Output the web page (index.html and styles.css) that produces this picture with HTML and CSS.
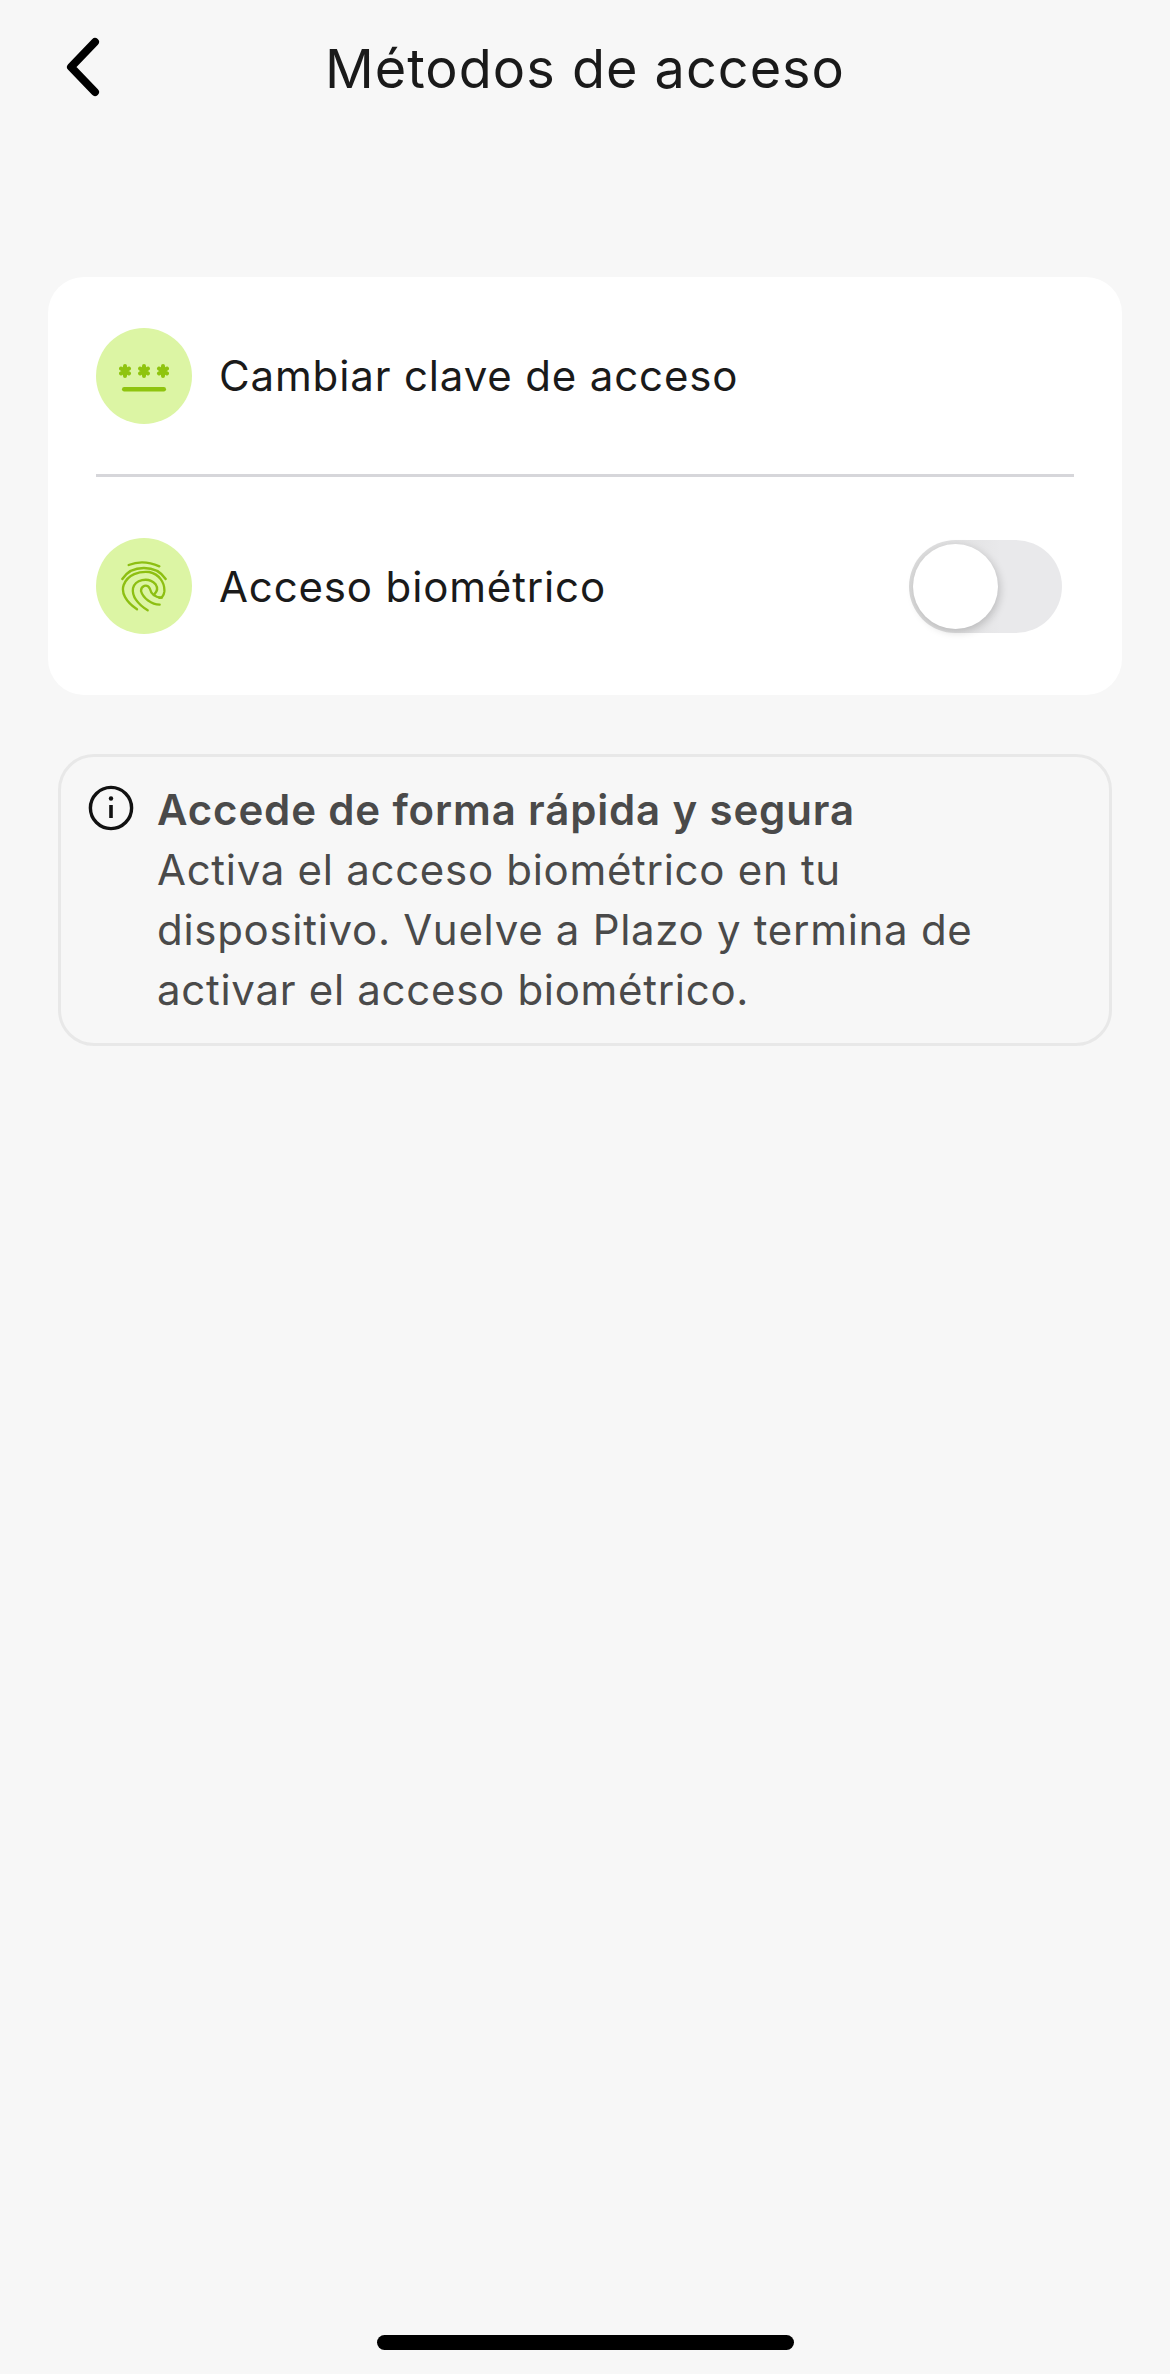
FILE: index.html
```html
<!DOCTYPE html>
<html lang="es">
<head>
    <meta charset="UTF-8">
    <meta name="viewport" content="width=device-width, initial-scale=1.0">
    <title>Métodos de acceso</title>
    <link rel="stylesheet" href="styles.css">
</head>
<body>
    <header class="topbar">
        <button class="back" aria-label="Volver">
            <svg width="40" height="64" viewBox="0 0 40 64" fill="none" stroke="#000" stroke-width="8" stroke-linecap="round" stroke-linejoin="round">
                <path d="M31 7 L7 32 L31 57"/>
            </svg>
        </button>
        <h1 class="title">Métodos de acceso</h1>
    </header>

    <main class="content">
        <section class="card">
            <div class="row">
                <span class="badge">
                    <svg width="50" height="32" viewBox="0 0 50 32" fill="#8fc40f">
                        <g stroke="#8fc40f" stroke-width="4" stroke-linecap="round">
                            <path d="M6 6 V16 M2 8.5 L10 13.5 M2 13.5 L10 8.5"/>
                            <path d="M25 6 V16 M21 8.5 L29 13.5 M21 13.5 L29 8.5"/>
                            <path d="M44 6 V16 M40 8.5 L48 13.5 M40 13.5 L48 8.5"/>
                        </g>
                        <rect x="3" y="27" width="44" height="4.5" rx="2.2"/>
                    </svg>
                </span>
                <span class="label">Cambiar clave de acceso</span>
            </div>
            <hr class="divider">
            <div class="row row-toggle">
                <span class="badge">
                    <svg width="46" height="54" viewBox="0 -6 138 162" fill="none" stroke="#8dbf12" stroke-width="7" stroke-linecap="round">
                        <path d="M23 12 Q66 -6 115 16"/>
                        <path d="M4 54 C32 10 105 10 134 54"/>
                        <path d="M48 145 C14 122 0 95 8 72 C20 40 55 30 85 33 C115 40 132 65 130 92 C128 108 120 112 114 110"/>
                        <path d="M80 148 C50 130 32 105 36 82 C42 58 80 45 104 70 C112 82 108 92 100 100"/>
                        <path d="M116 131 C92 130 66 112 60 90 C60 74 78 68 86 82 C90 98 100 110 122 110"/>
                    </svg>
                </span>
                <span class="label">Acceso biométrico</span>
                <span class="switch"><span class="knob"></span></span>
            </div>
        </section>

        <section class="notice">
            <svg class="notice-icon" width="46" height="46" viewBox="0 0 46 46" fill="none" stroke="#111" stroke-width="3.4">
                <circle cx="23" cy="23" r="20.6"/>
                <path d="M23 20 V33" stroke-width="3.6"/>
                <circle cx="23" cy="13.5" r="2.2" fill="#111" stroke="none"/>
            </svg>
            <p class="notice-text">
                <strong>Accede de forma rápida y segura</strong><br>
                Activa el acceso biométrico en tu dispositivo. Vuelve a Plazo y termina de activar el acceso biométrico.
            </p>
        </section>
    </main>

    <div class="home-bar"></div>
</body>
</html>
```

FILE: styles.css
```css
* {
    box-sizing: border-box;
}
html, body {
    height: 100%;
}
body {
    margin: 0;
    display: flex;
    flex-direction: column;
    background-color: #f7f7f7;
    font-family: Inter, "Liberation Sans", sans-serif;
    color: #1a1a1a;
}
.topbar {
    position: relative;
    height: 136px;
    display: flex;
    justify-content: center;
    align-items: center;
}
.back {
    position: absolute;
    left: 64px;
    top: 35px;
    padding: 0;
    border: none;
    background: none;
    line-height: 0;
}
.title {
    margin: 0;
    font-size: 54px;
    font-weight: 400;
    letter-spacing: 1px;
}
.content {
    flex: 1;
    padding: 141px 48px 0;
}
.card {
    height: 418px;
    padding: 0 48px;
    background-color: #fff;
    border-radius: 36px;
}
.row {
    display: flex;
    align-items: center;
    gap: 27px;
    height: 197px;
}
.row-toggle {
    height: 218px;
}
.badge {
    flex: none;
    width: 96px;
    height: 96px;
    display: flex;
    justify-content: center;
    align-items: center;
    border-radius: 50%;
    background-color: #dcf5a4;
}
.label {
    flex: 1;
    font-size: 42px;
    letter-spacing: 0.85px;
}
.divider {
    height: 3px;
    margin: 0;
    border: none;
    background-color: #d6d6da;
}
.switch {
    width: 153px;
    height: 93px;
    margin-right: 12px;
    padding: 4px;
    border-radius: 47px;
    background: linear-gradient(90deg, #d9d9d9, #e9e9eb 60%);
}
.knob {
    display: block;
    width: 85px;
    height: 85px;
    border-radius: 50%;
    background-color: #fff;
    box-shadow: 2px 3px 8px rgba(0, 0, 0, 0.18);
}
.notice {
    display: flex;
    gap: 23px;
    height: 292px;
    margin: 59px 10px 0;
    padding: 28px 90px 0 27px;
    border: 3px solid #e8e8e8;
    border-radius: 36px;
}
.notice-icon {
    flex: none;
}
.notice-text {
    margin: -5px 0 0;
    font-size: 42px;
    line-height: 60px;
    letter-spacing: 0.7px;
    color: #4a4a4a;
}
.notice-text strong {
    font-weight: 600;
    letter-spacing: 0.85px;
}
.home-bar {
    flex: none;
    width: 417px;
    height: 15px;
    margin: 0 auto 24px;
    border-radius: 8px;
    background-color: #000;
}
```
